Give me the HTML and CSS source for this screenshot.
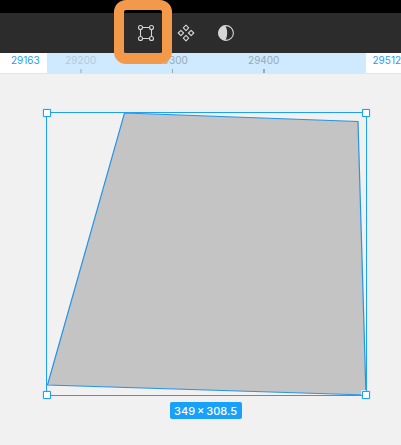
FILE: index.html
```html
<!DOCTYPE html>
<html lang="en">
<head>
<meta charset="utf-8">
<title>Vector editor</title>
<link rel="stylesheet" href="styles.css">
</head>
<body>
<div class="app">
  <div class="titlebar"></div>
  <header class="toolbar">
    <svg class="tool" viewBox="0 0 20 20">
      <path d="M6.500 4.500h7M6.500 15.500h7M4.500 6.500v7M15.500 6.500v7"/>
      <circle cx="4.500" cy="4.500" r="2"/><circle cx="15.500" cy="4.500" r="2"/><circle cx="4.500" cy="15.500" r="2"/><circle cx="15.500" cy="15.500" r="2"/>
    </svg>
    <svg class="tool" viewBox="0 0 20 20">
      <path d="M10 2.200l2.700 2.700-2.700 2.700-2.700-2.700zM10 12.400l2.700 2.700-2.700 2.700-2.700-2.700zM4.900 7.300l2.700 2.700-2.700 2.700L2.200 10zM15.100 7.300l2.700 2.700-2.700 2.700-2.700-2.700z"/>
    </svg>
    <svg class="tool" viewBox="0 0 20 20">
      <circle cx="10" cy="10" r="7.400"/>
      <path class="filled" d="M9 2.500a7.550 7.550 0 0 0 0 15c1.500-2 2.200-4.700 2.200-7.500S10.500 4.500 9 2.500z"/>
    </svg>
  </header>
  <div class="ruler">
    <span class="edge start">29163</span>
    <div class="range">
      <span class="mark faded">29200</span>
      <span class="mark">29300</span>
      <span class="mark">29400</span>
    </div>
    <span class="edge end">29512</span>
  </div>
  <main class="canvas">
    <svg class="drawing" viewBox="0 74 401 326">
      <path class="shape" d="M124.500 113L358 121.500 366 395 47.500 385z"/>
      <path class="halo" d="M42.500 108.500h9v9h-9zM361.500 108.500h9v9h-9zM42.500 390.500h9v9h-9zM361.500 390.500h9v9h-9z"/>
      <path class="bounds" d="M46.500 112.500h320v283h-320z"/>
      <path class="handles" d="M43.500 109.500h7v7h-7zM362.500 109.500h7v7h-7zM43.500 391.500h7v7h-7zM362.500 391.500h7v7h-7z"/>
    </svg>
    <div class="size">349 × 308.5</div>
  </main>
  <div class="highlight"></div>
</div>
</body>
</html>
```
FILE: styles.css
```css
body {
  margin: 0;
  font-family: Inter, "Liberation Sans", sans-serif;
}
.app {
  position: relative;
  width: 401px;
  height: 445px;
  overflow: hidden;
  background: #f1f1f1;
}
.titlebar {
  height: 13px;
  background: #000;
}
.toolbar {
  box-sizing: border-box;
  display: flex;
  gap: 20px;
  height: 40px;
  padding: 10px 0 0 136px;
  background: #2c2c2c;
}
.tool {
  width: 20px;
  height: 20px;
  fill: none;
  stroke: #d6d6d6;
  stroke-width: 1.1;
  stroke-linejoin: round;
}
.tool .filled {
  fill: #d6d6d6;
  stroke: none;
}
.ruler {
  box-sizing: border-box;
  display: grid;
  grid-template-columns: 47px 319px 35px;
  height: 21px;
  border-bottom: 1px solid #e4e4e4;
  background: #fff;
  font-size: 10px;
  line-height: 15px;
}
.edge {
  color: #289df0;
}
.start {
  padding-left: 11px;
}
.end {
  padding-left: 6.5px;
}
.range {
  display: flex;
  overflow: hidden;
  background: #cfe9fe;
}
.mark {
  flex: 0 0 91.5px;
  color: #97a9b5;
  text-align: center;
}
.mark:first-child {
  margin-left: -12px;
}
.mark::after {
  content: "";
  display: block;
  width: 1.5px;
  height: 4px;
  margin: 1px auto 0;
  background: currentColor;
}
.mark.faded {
  color: #b3cad9;
}
.canvas {
  display: flex;
  flex-direction: column;
  align-items: center;
}
.drawing {
  width: 401px;
  height: 326px;
}
.shape {
  fill: #c4c4c4;
  stroke: #2594e6;
  stroke-width: 1.2;
}
.halo {
  fill: none;
  stroke: #d9ebf8;
}
.bounds {
  fill: none;
  stroke: #1ba0fb;
}
.handles {
  fill: #fff;
  stroke: #1ba0fb;
}
.size {
  width: 72px;
  height: 17px;
  margin: 2px 0 0 10px;
  border-radius: 2px;
  background: #18a0fb;
  color: #fff;
  font-size: 11px;
  font-weight: 500;
  line-height: 18px;
  word-spacing: -1px;
  text-align: center;
  white-space: nowrap;
}
.highlight {
  position: absolute;
  top: 0;
  left: 114px;
  box-sizing: border-box;
  width: 58px;
  height: 64px;
  border: 10px solid #f2994a;
  border-bottom-width: 11px;
  border-radius: 12px;
}
```
